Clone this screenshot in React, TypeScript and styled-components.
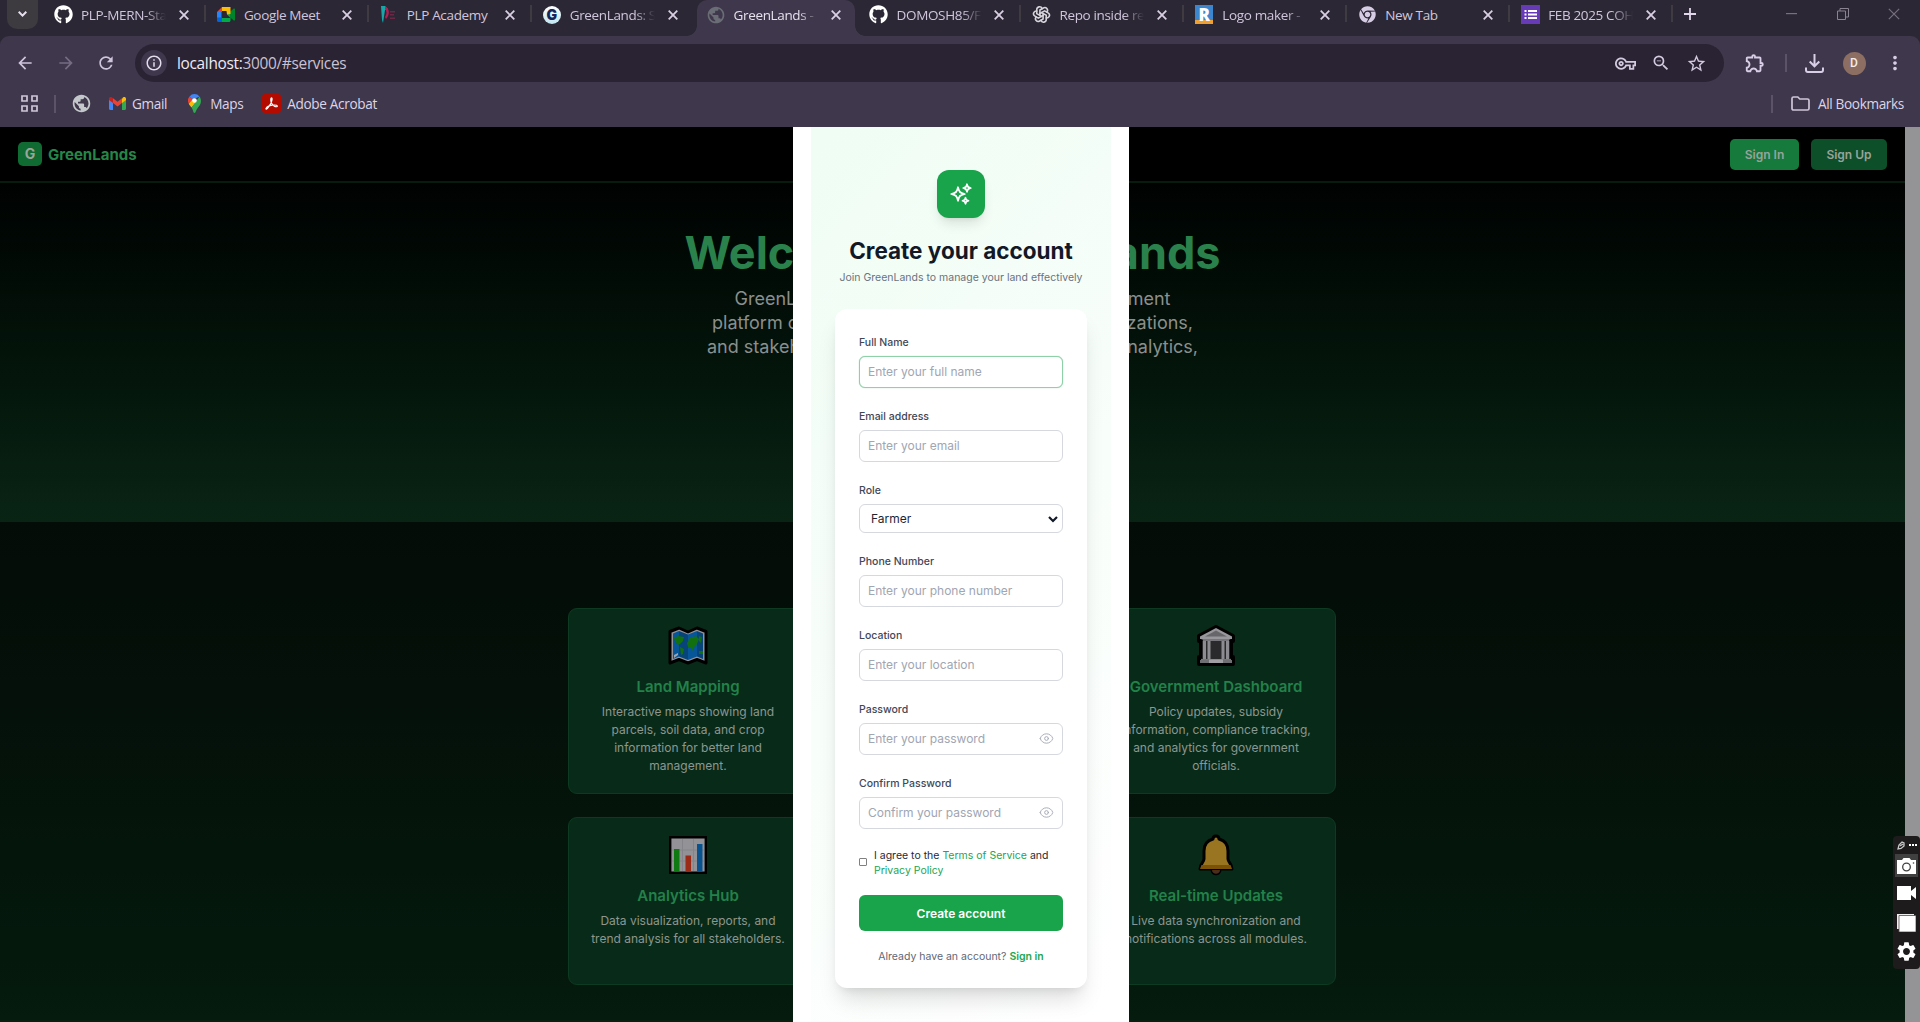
import React from 'react';
import styled, { createGlobalStyle, css } from 'styled-components';
import { FaGithub, FaChrome } from 'react-icons/fa';
import { TbBrandOpenai } from 'react-icons/tb';
import { HiOutlineSparkles, HiOutlineEye } from 'react-icons/hi2';
import {
  MdArrowBack, MdArrowForward, MdRefresh, MdInfoOutline, MdOutlineVpnKey, MdZoomOut, MdStarBorder,
  MdOutlineExtension, MdMoreVert, MdPublic, MdSettings,
} from 'react-icons/md';

const GlobalStyle = createGlobalStyle`
  * { box-sizing: border-box; }
  html, body { margin: 0; padding: 0; overflow: hidden; background: #000; }
  p, h1, h2, h3 { margin: 0; }
  svg { display: block; flex: none; }
  input, button, select { font-family: inherit; }
`;

const ui = "'Open Sans', 'Noto Sans', sans-serif";
const inter = "Inter, 'Liberation Sans', sans-serif";

const Window = styled.div`
  width: 1920px;
  height: 1022px;
  display: flex;
  flex-direction: column;
  overflow: hidden;
  font-family: ${inter};
`;

/* ---------- browser chrome ---------- */

const Chrome = styled.header`
  flex: none;
  height: 127px;
  background: #2c2735;
  font-family: ${ui};
  color: #dfd8e8;
`;

const ToolArea = styled.div`
  height: 91px;
  background: #3f374c;
  border-radius: 9px 9px 0 0;
`;

const TabStrip = styled.div`
  height: 36px;
  display: flex;
  background: #2c2735;
`;

const TabSearch = styled.div`
  width: 31px;
  height: 30px;
  margin: -1px 4px 0 7px;
  border-radius: 0 0 10px 10px;
  background: #3d3a40;
  display: flex;
  align-items: center;
  justify-content: center;
`;

const Tab = styled.div<{ $active?: boolean; $rule?: boolean }>`
  position: relative;
  width: 162.9px;
  height: 30px;
  padding: 0 16px 0 11px;
  display: flex;
  align-items: center;
  gap: 8px;
  > svg { margin-left: auto; margin-top: -1px; }
  ${p => p.$rule && css`
    &::after {
      content: '';
      position: absolute;
      right: -1px;
      top: 5px;
      width: 2px;
      height: 17px;
      background: #403b42;
    }
  `}
  ${p => p.$active && css`
    height: 36px;
    padding-bottom: 6px;
    background: #3f374c;
    border-radius: 10px 10px 0 0;
    margin: 0 3px 0 3px;
    width: 158px;
    padding-left: 9px;
    padding-right: 14px;
    &::before, &::after {
      content: '';
      position: absolute;
      bottom: 0;
      width: 10px;
      height: 10px;
    }
    &::before { left: -10px; background: radial-gradient(circle at 0 0, transparent 9.5px, #3f374c 10px); }
    &::after { right: -10px; background: radial-gradient(circle at 100% 0, transparent 9.5px, #3f374c 10px); }
  `}
`;

const Favicon = styled.div`
  width: 20px;
  height: 20px;
  display: flex;
  align-items: center;
  justify-content: center;
  flex: none;
  margin-bottom: 1px;
`;

const TabTitle = styled.span<{ $fade?: boolean; $active?: boolean }>`
  flex: none;
  width: 85px;
  overflow: hidden;
  white-space: nowrap;
  font-size: 13.5px;
  letter-spacing: -0.35px;
  line-height: 20px;
  color: ${p => (p.$active ? '#e6e0ec' : '#cfc6dc')};
  ${p => p.$fade && css`
    mask-image: linear-gradient(90deg, #000 76%, transparent 100%);
  `}
`;

const StripIcon = styled.span<{ $w: number; $x?: number }>`
  width: ${p => p.$w}px;
  margin-left: ${p => p.$x || 0}px;
  height: 28px;
  display: flex;
  align-items: center;
  justify-content: center;
`;

const Toolbar = styled.div`
  height: 54px;
  display: flex;
  align-items: center;
  padding: 0 15px 0 15px;
`;

const Nav = styled.div`
  width: 120px;
  display: flex;
  gap: 20.5px;
  color: #cfc5dc;
`;

const Omnibox = styled.div`
  width: 1589px;
  height: 38px;
  border-radius: 19px;
  background: #2a2333;
  display: flex;
  align-items: center;
  padding: 0 17px 0 6px;
`;

const InfoBadge = styled.span`
  width: 26px;
  height: 26px;
  border-radius: 50%;
  background: #3f374c;
  display: flex;
  align-items: center;
  justify-content: center;
`;

const Url = styled.span`
  flex: 1;
  margin-left: 10px;
  font-size: 15.4px;
  letter-spacing: -0.3px;
  color: #c9c2d1;
  b { font-weight: 400; color: #efeaf4; }
`;

const OmniTools = styled.div`
  display: flex;
  gap: 15px;
  align-items: center;
  color: #d3cadf;
`;

const ToolbarTools = styled.div`
  flex: 1;
  display: flex;
  align-items: center;
  justify-content: space-between;
  padding-left: 20px;
  margin-right: -1px;
  color: #d8cee6;
`;

const Rule = styled.span<{ $h?: number }>`
  width: 2px;
  height: ${p => p.$h || 18}px;
  background: #5c5369;
`;

const Avatar = styled.span`
  width: 23px;
  height: 23px;
  border-radius: 50%;
  background: #8d6e63;
  color: #f3ece8;
  font: 500 12px/23px Roboto, sans-serif;
  text-align: center;
`;

const Bookmarks = styled.div`
  height: 27px;
  display: flex;
  align-items: center;
  padding: 0 16px 0 21px;
  font-size: 13.6px;
  letter-spacing: -0.35px;
  color: #ddd5e6;
`;

const Bookmark = styled.span<{ $x: number; $gap: number }>`
  display: flex;
  align-items: center;
  margin-left: ${p => p.$x}px;
  gap: ${p => p.$gap}px;
  white-space: nowrap;
`;

const Spacer = styled.span`flex: 1;`;

/* ---------- page under the dimmed backdrop ---------- */

const Viewport = styled.main`
  position: relative;
  flex: 1;
  display: flex;
  min-height: 0;
`;

const Page = styled.div`
  width: 1905px;
  display: flex;
  flex-direction: column;
`;

const Scrollbar = styled.div`
  width: 15px;
  background: #949496;
`;

const SiteHeader = styled.div`
  height: 56px;
  flex: none;
  background: #000;
  border-bottom: 2px solid #051c0f;
  display: flex;
  align-items: center;
  justify-content: space-between;
  padding: 0 18px;
`;

const Brand = styled.div`
  display: flex;
  align-items: center;
  gap: 6px;
  color: #258648;
  font-weight: 700;
  font-size: 15px;
`;

const BrandMark = styled.span`
  width: 24px;
  height: 24px;
  border-radius: 5px;
  background: #0f6b32;
  color: #9aa59d;
  font-size: 14px;
  line-height: 24px;
  text-align: center;
`;

const HeaderActions = styled.div`
  display: flex;
  gap: 12px;
`;

const HeaderButton = styled.button<{ $w: number; $bg: string }>`
  width: ${p => p.$w}px;
  height: 31px;
  border: 0;
  border-radius: 5px;
  background: ${p => p.$bg};
  color: #98a39b;
  font-size: 12px;
  font-weight: 600;
  padding: 0;
`;

const Hero = styled.section`
  height: 339px;
  flex: none;
  display: flex;
  flex-direction: column;
  align-items: center;
  padding-top: 41px;
  background: linear-gradient(180deg, #000201 0%, #03130a 50%, #092414 100%);
`;

const HeroTitle = styled.h1`
  font-size: 45px;
  line-height: 58px;
  font-weight: 700;
  color: #2a814b;
  white-space: nowrap;
`;

const HeroLine = styled.p<{ $w: number }>`
  width: ${p => p.$w}px;
  display: flex;
  justify-content: space-between;
  font-size: 18px;
  line-height: 24px;
  color: #8b8f8d;
  white-space: nowrap;
`;

const HeroText = styled.div`
  display: flex;
  flex-direction: column;
  align-items: center;
  margin-top: 5px;
`;

const Services = styled.section`
  flex: 1;
  padding-top: 86px;
  border-bottom: 2px solid #06200f;
  background: linear-gradient(180deg, #040c07 0%, #04110a 40%, #041b0d 100%);
`;

const CardGrid = styled.div`
  width: 769px;
  margin: 0 auto;
  display: grid;
  grid-template-columns: repeat(3, 240px);
  grid-template-rows: 186px 168px;
  gap: 23px 24px;
`;

const ServiceCard = styled.article<{ $col: number }>`
  grid-column: ${p => p.$col};
  border: 1px solid #0d3a20;
  border-radius: 9px;
  background: #082b19;
  padding: 16px 12px 0;
  display: flex;
  flex-direction: column;
  align-items: center;
  text-align: center;
  h3 {
    margin-top: 8px;
    font-size: 15px;
    line-height: 24px;
    font-weight: 600;
    color: #23814a;
    white-space: nowrap;
  }
  p {
    margin-top: 4px;
    font-size: 12px;
    line-height: 18px;
    color: #8d9690;
    white-space: pre;
  }
`;

/* ---------- sign-up dialog ---------- */

const Modal = styled.div`
  position: absolute;
  left: 793px;
  top: 0;
  width: 336px;
  height: 895px;
  padding: 0 18px;
  background: #fff;
`;

const ModalBody = styled.div`
  height: 100%;
  background: linear-gradient(135deg, #effdf4 0%, #f8fefa 50%, #ffffff 100%);
  padding: 43px 24px 0;
  display: flex;
  flex-direction: column;
  align-items: center;
`;

const Badge = styled.div`
  width: 48px;
  height: 48px;
  flex: none;
  border-radius: 12px;
  background: #19a34a;
  color: #fff;
  display: flex;
  align-items: center;
  justify-content: center;
  box-shadow: 0 8px 12px -2px rgba(0, 0, 0, 0.1), 0 3px 5px -3px rgba(0, 0, 0, 0.1);
`;

const ModalTitle = styled.h2`
  margin-top: 18px;
  font-size: 22.5px;
  line-height: 30px;
  font-weight: 700;
  color: #111827;
  white-space: nowrap;
`;

const ModalSub = styled.p`
  margin-top: 4px;
  font-size: 10.5px;
  line-height: 16px;
  color: #6a7280;
  white-space: nowrap;
`;

const FormCard = styled.form`
  width: 252px;
  height: 679px;
  flex: none;
  margin-top: 23px;
  padding: 26px 24px 0;
  border-radius: 12px;
  background: #fff;
  box-shadow: 0 16px 22px -5px rgba(0, 0, 0, 0.13), 0 6px 10px -5px rgba(0, 0, 0, 0.1);
`;

const Field = styled.label`
  display: block;
  margin-bottom: 21px;
  font-size: 10.5px;
  line-height: 16px;
  font-weight: 500;
  color: #3f4857;
`;

const control = css`
  display: block;
  width: 100%;
  border-radius: 6px;
  background: #fff;
  font-size: 12px;
  font-weight: 400;
  outline: none;
`;

const InputWrap = styled.span`
  position: relative;
  display: block;
  margin-top: 5px;
  svg { position: absolute; right: 9px; top: 8px; color: #a3a9b5; }
`;

const Input = styled.input<{ $focus?: boolean }>`
  ${control}
  height: 32px;
  padding: 0 8px 1px;
  border: 1px solid ${p => (p.$focus ? '#8fd0a8' : '#d5d8de')};
  box-shadow: ${p => (p.$focus ? '0 0 1px #86cca1' : 'none')};
  &::placeholder { color: #a0a6b2; opacity: 1; }
`;

const SelectBox = styled.span`
  ${control}
  height: 29px;
  padding: 1px 4px 0 11px;
  border: 1px solid #d5d8de;
  color: #1f2633;
  display: flex;
  align-items: center;
  justify-content: space-between;
`;

const Agree = styled.div`
  display: flex;
  align-items: center;
  gap: 7px;
  margin-top: -2px;
  font-size: 10.5px;
  line-height: 15px;
  color: #1f2937;
  white-space: nowrap;
  a { color: #22a652; }
`;

const Check = styled.span`
  width: 8px;
  height: 8px;
  flex: none;
  margin-top: -2px;
  border: 1px solid #808080;
  border-radius: 1px;
`;

const Submit = styled.button`
  display: block;
  width: 100%;
  height: 36px;
  margin-top: 17px;
  border: 0;
  border-radius: 6px;
  background: #19a34a;
  color: #fff;
  font-size: 12px;
  font-weight: 600;
`;

const Foot = styled.p`
  margin-top: 18px;
  text-align: center;
  font-size: 10.5px;
  line-height: 16px;
  color: #5f6775;
  white-space: nowrap;
  a { color: #22a652; font-weight: 600; }
`;

/* ---------- floating capture widget ---------- */

const Capture = styled.aside`
  position: absolute;
  right: 0;
  top: 709px;
  width: 27px;
  height: 133px;
  border-radius: 4px;
  background: #1d1b1c;
  display: flex;
  flex-direction: column;
  align-items: center;
`;

const CaptureTop = styled.div`
  height: 18px;
  width: 100%;
  padding: 0 3px 0 4px;
  display: flex;
  align-items: center;
  justify-content: space-between;
`;

const CaptureCell = styled.div<{ $on?: boolean; $h: number }>`
  width: 23px;
  height: ${p => p.$h}px;
  background: ${p => (p.$on ? '#414041' : 'transparent')};
  display: flex;
  align-items: center;
  justify-content: center;
`;

/* ---------- icons ---------- */

const Close = ({ size = 10, color = '#d8cfe3', w = 1.8 }) => (
  <svg width={size} height={size} viewBox="0 0 10 10" stroke={color} strokeWidth={w} fill="none">
    <path d="M.7.7 9.3 9.3M9.3.7.7 9.3" />
  </svg>
);

const MeetIcon = () => (
  <svg width="18" height="15" viewBox="0 0 18 15">
    <path d="M5 0h8.500v4H5z" fill="#fbbc04" />
    <path d="M5 0v5H0z" fill="#ea4335" />
    <path d="M0 5h4.500v6H0z" fill="#2684fc" />
    <path d="M0 10.500h5V15H1.500A1.500 1.500 0 0 1 0 13.500z" fill="#0066da" />
    <path d="M5 11h8.500v2.500c0 .9-.6 1.500-1.500 1.500H5zM10 7.500 13.500 5v6z" fill="#00ac47" />
    <path d="M13 4.800 16.800 1.600c.5-.4 1.200-.1 1.200.5v10.800c0 .6-.7.9-1.200.5L13 10.200z" fill="#00832d" />
    <path d="M9.500 4h4v3l-3.500.5z" fill="#fbbc04" />
  </svg>
);

const PlpIcon = () => (
  <svg width="18" height="19" viewBox="0 0 18 19">
    <path d="M1 1h4l3 3-3 1-2 13-1-3z" fill="#19a6a8" />
    <path d="M5 2c5 1 5 8 1 12l-1-2c2-3 2-6 0-8z" fill="#b51f55" />
    <path d="M10 6h5v1.500h-5zM10 9h4v1.500h-4zM10 12.500h5V14h-5z" fill="#6c2745" />
  </svg>
);

const Disc = styled.span`
  width: 18px;
  height: 18px;
  border-radius: 50%;
  background: linear-gradient(#fff, #bfe6f2);
  color: #15265c;
  font: 900 14px/18px Inter, sans-serif;
  text-align: center;
`;

const RBadge = styled.span`
  width: 18px;
  height: 19px;
  background: linear-gradient(#3c86cf 78%, #f0a030 78%);
  color: #fff;
  font: 900 17px/19px 'Open Sans', sans-serif;
  text-align: center;
`;

const FormsIcon = () => (
  <svg width="19" height="19" viewBox="0 0 19 19">
    <path d="M0 0h19v19H0z" fill="#673ab7" />
    <path d="M3.500 5h2v2h-2zM7 5h9v2H7zM3.500 8.500h2v2h-2zM7 8.500h9v2H7zM3.500 12h2v2h-2zM7 12h9v2H7z" fill="#fff" />
  </svg>
);

const GmailIcon = () => (
  <svg width="17" height="13" viewBox="0 0 17 13">
    <path d="M0 2v9.800C0 12.500.5 13 1.200 13H4V5z" fill="#4285f4" />
    <path d="M17 2v9.800c0 .7-.5 1.200-1.200 1.200H13V5z" fill="#34a853" />
    <path d="M13 1.500V6l4-3V1.800C17 .2 15.200-.5 14 .5z" fill="#fbbc04" />
    <path d="M4 6V1.300L8.500 4.700 13 1.300V6L8.500 9.400z" fill="#ea4335" />
    <path d="M0 1.800V3l4 3V1.300L3 .5C1.800-.5 0 .2 0 1.800z" fill="#c5221f" />
  </svg>
);

const MapsIcon = () => (
  <svg width="13" height="19" viewBox="0 0 13 19">
    <path d="M6.500 0A6.500 6.500 0 0 0 1.500 2.400L5 5.500 11.500 2.400A6.500 6.500 0 0 0 6.500 0z" fill="#4285f4" />
    <path d="M1.500 2.400A6.500 6.500 0 0 0 .8 9.700L5 5.200z" fill="#ea4335" />
    <path d="M.8 9.700 4.800 5l3.600 3.300L3.600 13.500C2.300 12 1.300 11 .8 9.700z" fill="#fbbc04" />
    <path d="M11.500 2.400c2.200 3 1.700 7.100-.3 9.600-2 2.500-3 4-3.700 6.200-.3 1-1.700 1-2 0-.3-1.500-1-3-1.900-4.700z" fill="#34a853" />
    <circle cx="6.500" cy="6.500" r="2.300" fill="#fff" />
  </svg>
);

const AcrobatIcon = () => (
  <svg width="19" height="19" viewBox="0 0 19 19">
    <rect width="19" height="19" rx="3" fill="#b30b00" />
    <path d="M4 14.500c1-2 3.500-3 6-3.300 2.500-.3 5-.2 5.300.8.300 1-1.800 1-3.200 0C10 10.500 8.600 7.500 8.800 5c.2-1.600 1.300-1.400 1.300 0C10 8 7 12.500 5.300 14.500c-.6.8-1.700.8-1.300 0z" fill="none" stroke="#fff" strokeWidth="1.200" />
  </svg>
);

const GridIcon = () => (
  <svg width="17" height="17" viewBox="0 0 17 17" fill="none" stroke="#cfc6d8" strokeWidth="1.700">
    <path d="M1 1h5v5H1zM11 1h5v5h-5zM1 11h5v5H1zM11 11h5v5h-5z" />
  </svg>
);

const FolderIcon = () => (
  <svg width="19" height="15" viewBox="0 0 19 15" fill="none" stroke="#cfc6d8" strokeWidth="1.700">
    <path d="M1 12.500V2.500C1 1.500 1.600 1 2.500 1h4.300l2 2h7.700c.9 0 1.500.6 1.500 1.500v8c0 .9-.6 1.500-1.500 1.500h-14C1.600 14 1 13.400 1 12.500z" />
  </svg>
);

const DownloadIcon = () => (
  <svg width="19" height="19" viewBox="0 0 19 19" fill="none" stroke="#d8cee6" strokeWidth="2">
    <path d="M9.500 0v12M4.700 7.500l4.800 4.800 4.800-4.800M1 13.500V16c0 1.200.6 2 1.800 2h13.400c1.200 0 1.800-.8 1.800-2v-2.500" />
  </svg>
);

const MapArt = () => (
  <svg width="40" height="40" viewBox="0 0 40 40">
    <path d="M2 5.500 11 2l9 4 9-4 9 3.500V37l-9-3.500-9 3.500-9-3.500L2 37z" fill="#929297" stroke="#000" strokeWidth="3" strokeLinejoin="round" />
    <path d="M5 7.500 11 5v25.500L5 33zM20 8.500 29 5v25.500L20 34z" fill="#07569a" />
    <path d="M11 5l9 3.500V34l-9-3.500zM29 5l6 2.500V33l-6-2.500z" fill="#064479" />
    <path d="M6 12l4-2 6 1-1 4-3 3-2 1-3-4zM12 21l4 2-1 5-2 1zM19 17l3-5 6-2 3 3-2 5-3 3-1 4-2-3-3-1zM31 10l3 1-1 6-2-2zM31 25h4v3h-4z" fill="#12700f" />
    <path d="M6 29l4-2v2l-4 3z" fill="#a0a4a8" />
  </svg>
);

const ChartArt = () => (
  <svg width="40" height="40" viewBox="0 0 40 40">
    <path d="M2.200 2.200h35.600v35.600H2.200z" fill="#929297" stroke="#000" strokeWidth="2.400" />
    <path d="M14.500 4v32M25.500 4v32M4 15h32M4 26h32" stroke="#84848a" />
    <path d="M6 14h5.500v22.500H6z" fill="#0f7a12" />
    <path d="M17.500 20.500H23v16h-5.500z" fill="#9b2a17" />
    <path d="M29 9h5.500v27.500H29z" fill="#08528f" />
  </svg>
);

const BankArt = () => (
  <svg width="42" height="42" viewBox="0 0 42 42">
    <path d="M21 2 38 11v5h-2v16h2v7H4v-7h2V16H4v-5z" fill="#77777b" stroke="#000" strokeWidth="4" strokeLinejoin="round" />
    <path d="M21 3 37 11.500V14H5v-2.500z" fill="#98989c" />
    <path d="M21 5.500 32 11.500H10z" fill="#67676b" />
    <path d="M7 16h28v18H7z" fill="#2a292b" />
    <path d="M8 16h3v18H8zM12.500 16h3v18h-3zM26.500 16h3v18h-3zM31 16h3v18h-3z" fill="#8d8d91" />
    <path d="M5 35h32v3H5z" fill="#707074" />
    <path d="M14 34.500h14V38H14z" fill="#a0a0a4" />
  </svg>
);

const BellArt = () => (
  <svg width="40" height="42" viewBox="0 0 40 42">
    <path d="M20 2c2 0 3 1.500 3 3 6 1.500 9 6 9 12v8c0 3 4 5 4 10H4c0-5 4-7 4-10v-8c0-6 3-10.500 9-12 0-1.500 1-3 3-3zM16 36h8c0 5-8 5-8 0z" fill="#9a7521" stroke="#000" strokeWidth="3" strokeLinejoin="round" />
    <path d="M16 36h8c0 5-8 5-8 0z" fill="#4b2d1d" />
    <path d="M5.500 31h29L36 35H4z" fill="#7c5208" />
  </svg>
);

const tabs: { title: string; icon: React.ReactNode; fade?: boolean; active?: boolean; rule?: boolean }[] = [
  { title: 'PLP-MERN-Sta', icon: <FaGithub size={19} color="#fff" />, fade: true, rule: true },
  { title: 'Google Meet', icon: <MeetIcon />, rule: true },
  { title: 'PLP Academy', icon: <PlpIcon />, rule: true },
  { title: 'GreenLands: S', icon: <Disc>G</Disc>, fade: true },
  { title: 'GreenLands -', icon: <MdPublic size={20} color="#6a6d75" />, fade: true, active: true },
  { title: 'DOMOSH85/F', icon: <FaGithub size={19} color="#fff" />, fade: true, rule: true },
  { title: 'Repo inside re', icon: <TbBrandOpenai size={19} color="#d6d3da" />, fade: true, rule: true },
  { title: 'Logo maker -', icon: <RBadge>R</RBadge>, fade: true, rule: true },
  { title: 'New Tab', icon: <FaChrome size={17} color="#d6cce4" />, rule: true },
  { title: 'FEB 2025 COH', icon: <FormsIcon />, fade: true, rule: true },
];

const services = [
  { col: 1, art: <MapArt />, title: 'Land Mapping', text: 'Interactive maps showing land\nparcels, soil data, and crop\ninformation for better land\nmanagement.' },
  { col: 3, art: <BankArt />, title: 'Government Dashboard', text: 'Policy updates, subsidy\ninformation, compliance tracking,\nand analytics for government\nofficials.' },
  { col: 1, art: <ChartArt />, title: 'Analytics Hub', text: 'Data visualization, reports, and\ntrend analysis for all stakeholders.' },
  { col: 3, art: <BellArt />, title: 'Real-time Updates', text: 'Live data synchronization and\nnotifications across all modules.' },
];

const ArtSlot = styled.div`
  height: 42px;
  display: flex;
  align-items: center;
`;

const TextField = ({ label, hint, focus, eye }: { label: string; hint: string; focus?: boolean; eye?: boolean }) => (
  <Field>
    {label}
    <InputWrap>
      <Input $focus={focus} placeholder={hint} />
      {eye && <HiOutlineEye size={15} />}
    </InputWrap>
  </Field>
);

const BrowserChrome = () => (
  <Chrome>
    <TabStrip>
      <TabSearch>
        <svg width="9" height="6" viewBox="0 0 9 6" fill="none" stroke="#e6e0ec" strokeWidth="2"><path d="M.7.8 4.500 4.600 8.300.8" /></svg>
      </TabSearch>
      {tabs.map(t => (
        <Tab key={t.title} $active={t.active} $rule={t.rule}>
          <Favicon>{t.icon}</Favicon>
          <TabTitle $fade={t.fade} $active={t.active}>{t.title}</TabTitle>
          <Close />
        </Tab>
      ))}
      <StripIcon $w={36}>
        <svg width="12" height="12" viewBox="0 0 12 12" stroke="#e0d8ea" strokeWidth="1.800"><path d="M6 0v12M0 6h12" /></svg>
      </StripIcon>
      <Spacer />
      <StripIcon $w={51}>
        <svg width="11" height="2" viewBox="0 0 11 2"><path d="M0 0h11v1.200H0z" fill="#77717e" /></svg>
      </StripIcon>
      <StripIcon $w={51}>
        <svg width="12" height="12" viewBox="0 0 12 12" fill="none" stroke="#8a8492"><path d="M.5 3h8v8.500h-8zM3 3V.500h8.500V9H8.500" /></svg>
      </StripIcon>
      <StripIcon $w={52}><Close size={12} color="#77717e" w={1} /></StripIcon>
    </TabStrip>
    <ToolArea>
      <Toolbar>
        <Nav>
          <MdArrowBack size={20} />
          <MdArrowForward size={20} color="#766d83" />
          <MdRefresh size={20} />
        </Nav>
        <Omnibox>
          <InfoBadge><MdInfoOutline size={18} color="#e3dcec" /></InfoBadge>
          <Url><b>localhost:</b>3000/#services</Url>
          <OmniTools>
            <MdOutlineVpnKey size={21} />
            <MdZoomOut size={20} />
            <MdStarBorder size={21} />
          </OmniTools>
        </Omnibox>
        <ToolbarTools>
          <MdOutlineExtension size={22} />
          <Rule />
          <DownloadIcon />
          <Avatar>D</Avatar>
          <MdMoreVert size={22} />
        </ToolbarTools>
      </Toolbar>
      <Bookmarks>
        <GridIcon />
        <Bookmark $x={16} $gap={0}><Rule /></Bookmark>
        <Bookmark $x={15} $gap={0}><MdPublic size={21} color="#c3c7cb" /></Bookmark>
        <Bookmark $x={17} $gap={6}><GmailIcon />Gmail</Bookmark>
        <Bookmark $x={21} $gap={9}><MapsIcon />Maps</Bookmark>
        <Bookmark $x={19} $gap={6}><AcrobatIcon />Adobe Acrobat</Bookmark>
        <Spacer />
        <Rule />
        <Bookmark $x={18} $gap={8}><FolderIcon />All Bookmarks</Bookmark>
      </Bookmarks>
    </ToolArea>
  </Chrome>
);

const SignUpDialog = () => (
  <Modal>
    <ModalBody>
      <Badge><HiOutlineSparkles size={24} strokeWidth={1.8} /></Badge>
      <ModalTitle>Create your account</ModalTitle>
      <ModalSub>Join GreenLands to manage your land effectively</ModalSub>
      <FormCard>
        <TextField label="Full Name" hint="Enter your full name" focus />
        <TextField label="Email address" hint="Enter your email" />
        <Field as="div">
          Role
          <InputWrap>
            <SelectBox>
              Farmer
              <svg width="10" height="7" viewBox="0 0 10 7" style={{ position: 'static' }} fill="none" stroke="#111827" strokeWidth="2.200"><path d="M1 1l4 4 4-4" /></svg>
            </SelectBox>
          </InputWrap>
        </Field>
        <TextField label="Phone Number" hint="Enter your phone number" />
        <TextField label="Location" hint="Enter your location" />
        <TextField label="Password" hint="Enter your password" eye />
        <TextField label="Confirm Password" hint="Confirm your password" eye />
        <Agree>
          <Check />
          <span>I agree to the <a>Terms of Service</a> and<br /><a>Privacy Policy</a></span>
        </Agree>
        <Submit type="button">Create account</Submit>
        <Foot>Already have an account? <a>Sign in</a></Foot>
      </FormCard>
    </ModalBody>
  </Modal>
);

const CaptureWidget = () => (
  <Capture>
    <CaptureTop>
      <svg width="8" height="9" viewBox="0 0 8 9" fill="none" stroke="#c8c8c8" strokeWidth="1.300"><path d="M1 8 2 4l3-3 2 1v3L4 7.500 1 8zM3 5l3-2" /></svg>
      <svg width="8" height="2" viewBox="0 0 8 2" fill="#fff"><path d="M0 0h2v2H0zM3 0h2v2H3zM6 0h2v2H6z" /></svg>
    </CaptureTop>
    <CaptureCell $on $h={23}>
      <svg width="19" height="16" viewBox="0 0 19 16">
        <path d="M0 2h5l1.500-2h6L14 2h5v14H0z" fill="#fff" />
        <circle cx="9.500" cy="9" r="3.800" fill="none" stroke="#414041" strokeWidth="1.300" />
        <circle cx="16.500" cy="5" r=".8" fill="#414041" />
      </svg>
    </CaptureCell>
    <CaptureCell $h={32}>
      <svg width="19" height="14" viewBox="0 0 19 14" fill="#fff"><path d="M0 0h14v5l5-4v12l-5-4v5H0z" /></svg>
    </CaptureCell>
    <CaptureCell $h={27}>
      <svg width="19" height="18" viewBox="0 0 19 18"><path d="M0 0h17v15H0z" fill="#eee" /><path d="M2 1.500h17V18H2z" fill="#fff" stroke="#5a4a50" strokeWidth=".8" /></svg>
    </CaptureCell>
    <CaptureCell $h={30}><MdSettings size={23} color="#fff" /></CaptureCell>
  </Capture>
);

export default function App() {
  return (
    <Window>
      <GlobalStyle />
      <BrowserChrome />
      <Viewport>
        <Page>
          <SiteHeader>
            <Brand><BrandMark>G</BrandMark>GreenLands</Brand>
            <HeaderActions>
              <HeaderButton $w={69} $bg="#157a3b">Sign In</HeaderButton>
              <HeaderButton $w={76} $bg="#0d4f28">Sign Up</HeaderButton>
            </HeaderActions>
          </SiteHeader>
          <Hero>
            <HeroTitle>Welcome to GreenLands</HeroTitle>
            <HeroText>
              <HeroLine $w={436}><span>GreenLands is a complete</span><span>management</span></HeroLine>
              <HeroLine $w={481}><span>platform connecting</span><span>farmers, organizations,</span></HeroLine>
              <HeroLine $w={491}><span>and stakeholders with</span><span>mapping, analytics,</span></HeroLine>
            </HeroText>
          </Hero>
          <Services>
            <CardGrid>
              {services.map(s => (
                <ServiceCard key={s.title} $col={s.col}>
                  <ArtSlot>{s.art}</ArtSlot>
                  <h3>{s.title}</h3>
                  <p>{s.text}</p>
                </ServiceCard>
              ))}
            </CardGrid>
          </Services>
        </Page>
        <Scrollbar />
        <SignUpDialog />
        <CaptureWidget />
      </Viewport>
    </Window>
  );
}
